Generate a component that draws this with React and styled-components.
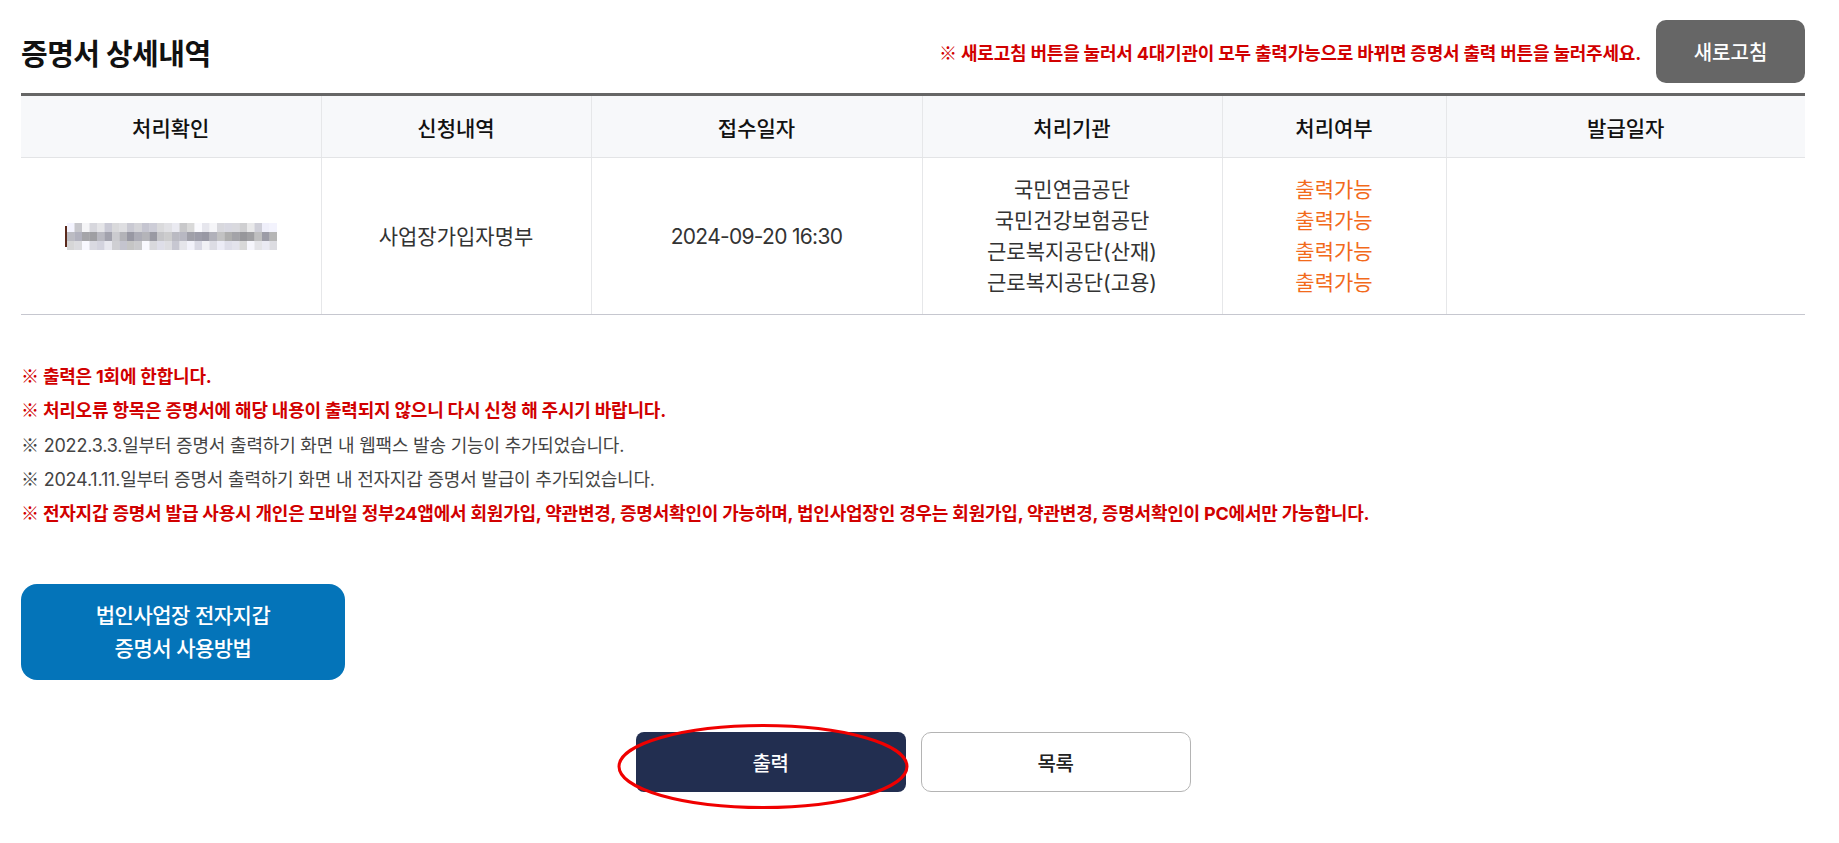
import React from "react";
import styled, { createGlobalStyle } from "styled-components";

const GlobalStyle = createGlobalStyle`
  html, body { margin: 0; padding: 0; background: #fff; }
  body { font-family: Inter, "Noto Sans CJK KR", sans-serif; color: #333; }
`;

const Page = styled.div`
  width: 1784px;
  padding: 20px 0 40px 21px;
`;

const TopBar = styled.div`
  display: flex;
  align-items: center;
  justify-content: space-between;
  height: 63px;
  margin-bottom: 10px;
`;

const Title = styled.h2`
  margin: 0;
  font-size: 29px;
  font-weight: 700;
  letter-spacing: -0.5px;
  color: #111;
`;

const TopRight = styled.div`
  display: flex;
  align-items: center;
  gap: 15px;
`;

const TopNotice = styled.p`
  margin: 0;
  font-size: 18px;
  font-weight: 700;
  letter-spacing: -0.2px;
  color: #d10000;
`;

const Mark = styled.span`
  font-family: "Noto Sans CJK KR", sans-serif;
  line-height: 0;
`;

const RefreshButton = styled.button`
  width: 149px;
  height: 63px;
  border: none;
  border-radius: 10px;
  background: #666;
  color: #fff;
  font-family: inherit;
  font-size: 20px;
  font-weight: 500;
`;

const Table = styled.table`
  width: 100%;
  border-collapse: collapse;
  table-layout: fixed;
  border-top: 3px solid #666;
`;

const Th = styled.th`
  height: 61px;
  padding: 0;
  background: #f7f8fa;
  border-bottom: 1px solid #e3e4e6;
  border-left: 1px solid #e6e7e9;
  font-size: 21px;
  font-weight: 500;
  color: #111;
  &:first-child { border-left: none; }
`;

const Td = styled.td`
  padding: 16px 0;
  text-align: center;
  vertical-align: middle;
  border-bottom: 1px solid #c6c7cf;
  border-left: 1px solid #e6e7e9;
  font-size: 21px;
  line-height: 31px;
  letter-spacing: ${(p) => (p.$tight ? "-0.7px" : "0")};
  color: #333;
  &:first-child { border-left: none; }
`;

const Line = styled.div`
  color: ${(p) => (p.$status ? "#f26a1b" : "#333")};
`;

const MosaicWrap = styled.div`
  display: flex;
  justify-content: center;
`;

const Notices = styled.ul`
  list-style: none;
  margin: 45px 0 0;
  padding: 0;
`;

const Notice = styled.li`
  font-size: 18px;
  line-height: 34.3px;
  letter-spacing: -0.2px;
  font-weight: ${(p) => (p.$warn ? 700 : 400)};
  color: ${(p) => (p.$warn ? "#d10000" : "#444")};
`;

const GuideButton = styled.button`
  display: block;
  margin-top: 53px;
  width: 324px;
  height: 96px;
  border: none;
  border-radius: 16px;
  background: #0474b9;
  color: #fff;
  font-family: inherit;
  font-size: 21px;
  font-weight: 500;
  line-height: 33px;
  letter-spacing: -0.5px;
`;

const BottomBar = styled.div`
  display: flex;
  justify-content: center;
  gap: 15px;
  margin-top: 52px;
`;

const ButtonSlot = styled.div`
  position: relative;
`;

const ActionButton = styled.button`
  width: 270px;
  height: 60px;
  border-radius: ${(p) => (p.$primary ? "8px" : "10px")};
  border: ${(p) => (p.$primary ? "none" : "1px solid #b4b4b4")};
  background: ${(p) => (p.$primary ? "#222e50" : "#fff")};
  color: ${(p) => (p.$primary ? "#fff" : "#222")};
  font-family: inherit;
  font-size: 20px;
  font-weight: 500;
  letter-spacing: -0.5px;
`;

const Ellipse = styled.svg`
  position: absolute;
  left: -19px;
  top: -8px;
  pointer-events: none;
  overflow: visible;
`;

function Mosaic() {
  const cols = 28;
  const rows = 3;
  const cw = 7.5;
  const ch = 9;
  let seed = 17;
  const rnd = () => {
    seed = (seed * 9301 + 49297) % 233280;
    return seed / 233280;
  };
  const cells = [];
  for (let r = 0; r < rows; r++) {
    for (let c = 0; c < cols; c++) {
      const base = r === 1 ? 150 : 195;
      const v = Math.round(base + rnd() * 55);
      const b = Math.min(255, v + Math.round(rnd() * 12));
      cells.push(
        <rect key={`${r}-${c}`} x={2 + c * cw} y={r * ch} width={cw + 0.3} height={ch + 0.3} fill={`rgb(${v},${v},${b})`} />
      );
    }
  }
  return (
    <svg width={2 + cols * cw} height={rows * ch} viewBox={`0 0 ${2 + cols * cw} ${rows * ch}`}>
      {cells}
      <rect x="0" y="3" width="2" height="21" fill="#5a2a1c" />
    </svg>
  );
}

const orgs = ["국민연금공단", "국민건강보험공단", "근로복지공단(산재)", "근로복지공단(고용)"];

export default function App() {
  return (
    <>
      <GlobalStyle />
      <Page>
        <TopBar>
          <Title>증명서 상세내역</Title>
          <TopRight>
            <TopNotice><Mark>※</Mark> 새로고침 버튼을 눌러서 4대기관이 모두 출력가능으로 바뀌면 증명서 출력 버튼을 눌러주세요.</TopNotice>
            <RefreshButton>새로고침</RefreshButton>
          </TopRight>
        </TopBar>

        <Table>
          <colgroup>
            <col style={{ width: 300 }} />
            <col style={{ width: 270 }} />
            <col style={{ width: 331 }} />
            <col style={{ width: 300 }} />
            <col style={{ width: 224 }} />
            <col />
          </colgroup>
          <thead>
            <tr>
              <Th>처리확인</Th>
              <Th>신청내역</Th>
              <Th>접수일자</Th>
              <Th>처리기관</Th>
              <Th>처리여부</Th>
              <Th>발급일자</Th>
            </tr>
          </thead>
          <tbody>
            <tr>
              <Td>
                <MosaicWrap>
                  <Mosaic />
                </MosaicWrap>
              </Td>
              <Td>사업장가입자명부</Td>
              <Td $tight>2024-09-20 16:30</Td>
              <Td>
                {orgs.map((o) => (
                  <Line key={o}>{o}</Line>
                ))}
              </Td>
              <Td>
                {orgs.map((o) => (
                  <Line key={o} $status>출력가능</Line>
                ))}
              </Td>
              <Td />
            </tr>
          </tbody>
        </Table>

        <Notices>
          <Notice $warn><Mark>※</Mark> 출력은 1회에 한합니다.</Notice>
          <Notice $warn><Mark>※</Mark> 처리오류 항목은 증명서에 해당 내용이 출력되지 않으니 다시 신청 해 주시기 바랍니다.</Notice>
          <Notice><Mark>※</Mark> 2022.3.3.일부터 증명서 출력하기 화면 내 웹팩스 발송 기능이 추가되었습니다.</Notice>
          <Notice><Mark>※</Mark> 2024.1.11.일부터 증명서 출력하기 화면 내 전자지갑 증명서 발급이 추가되었습니다.</Notice>
          <Notice $warn><Mark>※</Mark> 전자지갑 증명서 발급 사용시 개인은 모바일 정부24앱에서 회원가입, 약관변경, 증명서확인이 가능하며, 법인사업장인 경우는 회원가입, 약관변경, 증명서확인이 PC에서만 가능합니다.</Notice>
        </Notices>

        <GuideButton>
          법인사업장 전자지갑
          <br />
          증명서 사용방법
        </GuideButton>

        <BottomBar>
          <ButtonSlot>
            <ActionButton $primary>출력</ActionButton>
            <Ellipse width="292" height="85" viewBox="0 0 292 85">
              <ellipse cx="146" cy="42.5" rx="144" ry="41" fill="none" stroke="#f00000" strokeWidth="3" />
            </Ellipse>
          </ButtonSlot>
          <ButtonSlot>
            <ActionButton>목록</ActionButton>
          </ButtonSlot>
        </BottomBar>
      </Page>
    </>
  );
}
